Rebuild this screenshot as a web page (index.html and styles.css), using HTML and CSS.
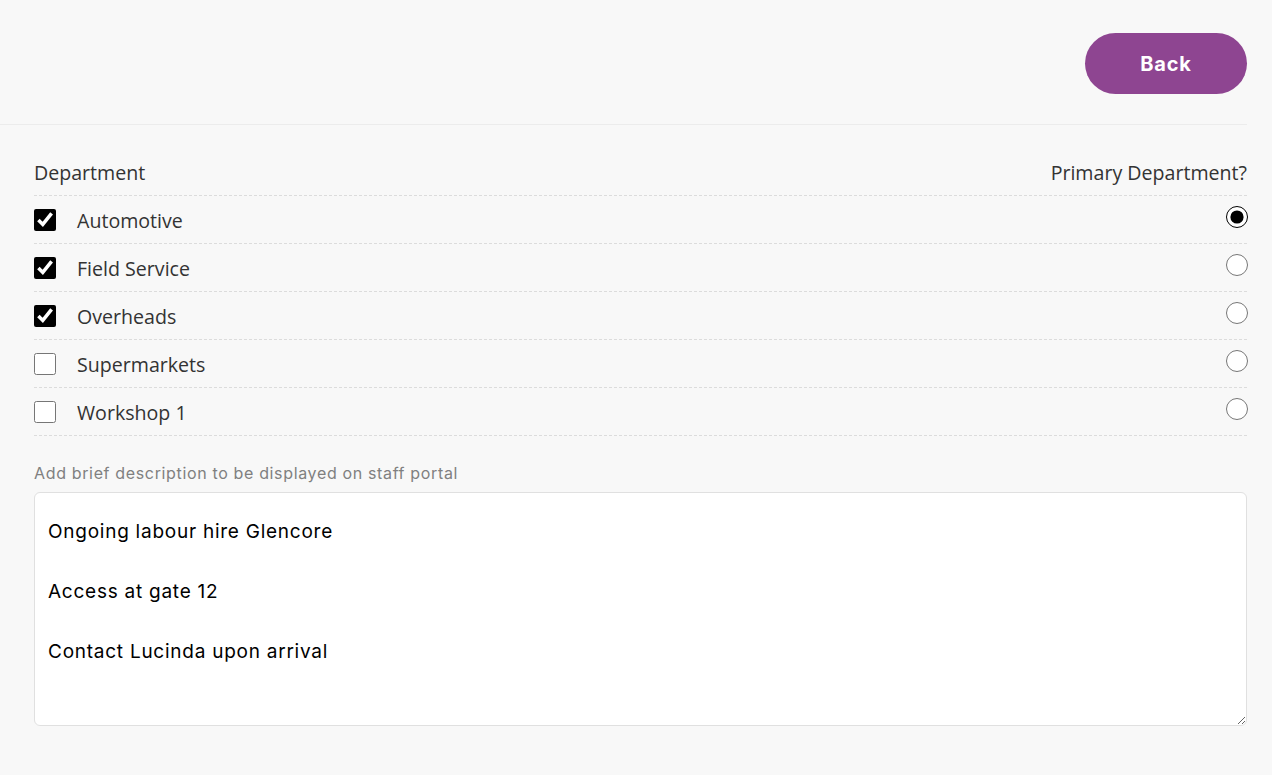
FILE: index.html
```html
<!DOCTYPE html>
<html lang="en">
<head>
	<meta charset="UTF-8">
	<title>Departments</title>
	<link rel="stylesheet" href="styles.css">
</head>
<body>
	<div class="header">
		<button class="back-btn" type="button">Back</button>
	</div>

	<div class="content">
		<div class="dept-head">
			<span>Department</span>
			<span>Primary Department?</span>
		</div>

		<div class="dept-list">
			<label class="dept-row">
				<input class="dept-check" type="checkbox" checked>
				<span class="dept-name">Automotive</span>
				<input class="dept-primary" type="radio" name="primary" checked>
			</label>
			<label class="dept-row">
				<input class="dept-check" type="checkbox" checked>
				<span class="dept-name">Field Service</span>
				<input class="dept-primary" type="radio" name="primary">
			</label>
			<label class="dept-row">
				<input class="dept-check" type="checkbox" checked>
				<span class="dept-name">Overheads</span>
				<input class="dept-primary" type="radio" name="primary">
			</label>
			<label class="dept-row">
				<input class="dept-check" type="checkbox">
				<span class="dept-name">Supermarkets</span>
				<input class="dept-primary" type="radio" name="primary">
			</label>
			<label class="dept-row">
				<input class="dept-check" type="checkbox">
				<span class="dept-name">Workshop 1</span>
				<input class="dept-primary" type="radio" name="primary">
			</label>
		</div>

		<div class="desc">
			<div class="desc-label">Add brief description to be displayed on staff portal</div>
			<textarea class="desc-text">Ongoing labour hire Glencore

Access at gate 12

Contact Lucinda upon arrival</textarea>
		</div>
	</div>
</body>
</html>
```

FILE: styles.css
```css
body {
	margin: 0;
	padding: 0;
	background-color: #f8f8f8;
	font-family: "Open Sans", "Liberation Sans", sans-serif;
	color: #333;
}

.header {
	display: flex;
	justify-content: flex-end;
	margin-right: 25px;
	padding: 33px 0 30px;
	border-bottom: 1px solid #ececec;
}
.back-btn {
	width: 162px;
	height: 61px;
	border: none;
	border-radius: 31px;
	background-color: #8e4591;
	color: #fff;
	font-family: "Inter", "Liberation Sans", sans-serif;
	font-size: 20px;
	font-weight: 700;
	letter-spacing: 0.8px;
	cursor: pointer;
}

.content {
	padding: 0 25px 0 34px;
}

.dept-head {
	display: flex;
	justify-content: space-between;
	align-items: center;
	height: 71px;
	padding-top: 25px;
	box-sizing: border-box;
	font-size: 19.6px;
	border-bottom: 1px dashed #dcdcdc;
}

.dept-row {
	display: flex;
	align-items: center;
	height: 47px;
	border-bottom: 1px dashed #dcdcdc;
	font-size: 19.6px;
}
.dept-check {
	width: 22px;
	height: 22px;
	margin: 0 21px 0 0;
	accent-color: #000;
}
.dept-name {
	flex: 1;
	padding-top: 2px;
}
.dept-primary {
	width: 22px;
	height: 22px;
	margin: 0 -1px 6px 0;
	accent-color: #000;
}

.desc {
	padding-top: 27px;
}
.desc-label {
	margin-bottom: 9px;
	font-family: "Inter", "Liberation Sans", sans-serif;
	font-size: 16px;
	letter-spacing: 0.65px;
	color: #808080;
}
.desc-text {
	display: block;
	width: 100%;
	height: 234px;
	box-sizing: border-box;
	padding: 24px 13px;
	border: 1px solid #e0e0e0;
	border-radius: 6px;
	background-color: #fff;
	font-family: "Inter", "Liberation Sans", sans-serif;
	font-size: 19px;
	letter-spacing: 0.75px;
	line-height: 30px;
	color: #000;
}
```
